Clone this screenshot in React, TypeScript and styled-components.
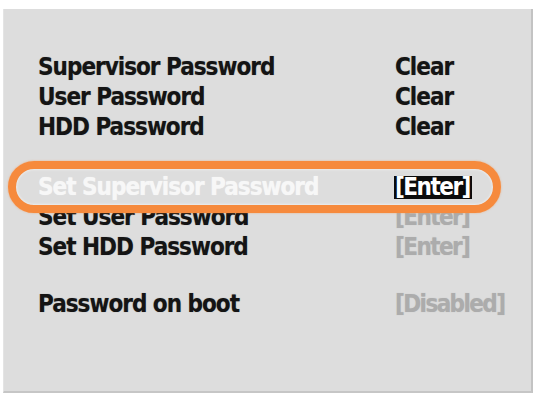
import styled, { createGlobalStyle } from "styled-components";

const GlobalStyle = createGlobalStyle`
  html, body {
    margin: 0;
    padding: 0;
    background: #ffffff;
  }
`;

const Screen = styled.div`
  width: 539px;
  height: 401px;
  padding: 9px 0 0 3px;
  box-sizing: border-box;
`;

const Panel = styled.div`
  width: 530px;
  height: 384px;
  box-sizing: border-box;
  background: #dddddd;
  border-right: 2px solid #c3c3c3;
  border-bottom: 2px solid #c6c6c6;
  border-left: 1px solid #e4e4e4;
  padding: 43px 0 0 34px;
  font-family: "Liberation Sans Narrow", "DejaVu Sans Condensed", sans-serif;
  font-weight: 700;
  font-size: 24px;
  line-height: 30px;
  letter-spacing: -1px;
  color: #141414;
`;

const Section = styled.div<{ $gap: number }>`
  display: grid;
  grid-template-columns: 357px auto;
  margin-top: ${(p) => p.$gap}px;
`;

const Row = styled.div`
  display: contents;
`;

const Label = styled.div<{ $selected?: boolean }>`
  position: relative;
  white-space: nowrap;
  color: ${(p) => (p.$selected ? "#f7f7f7" : "#141414")};
  text-shadow: 0 0 1px ${(p) => (p.$selected ? "rgba(255,255,255,0.6)" : "rgba(0,0,0,0.35)")};
`;

const Value = styled.div<{ $muted?: boolean }>`
  white-space: nowrap;
  color: ${(p) => (p.$muted ? "#acacac" : "#141414")};
  letter-spacing: ${(p) => (p.$muted ? "-1.6px" : "-1px")};
  text-shadow: 0 0 1px ${(p) => (p.$muted ? "rgba(150,150,150,0.4)" : "rgba(0,0,0,0.35)")};
`;

const Field = styled.span`
  display: inline-block;
  background: #0c0c0c;
  color: #ffffff;
  letter-spacing: -1.5px;
  line-height: 23px;
  padding: 0 2px 0 1px;
  margin-left: -1px;
`;

const Highlight = styled.div`
  position: absolute;
  left: -30px;
  top: -11px;
  width: 493px;
  height: 52px;
  box-sizing: border-box;
  border: 8px solid #f68a3d;
  border-radius: 26px;
  box-shadow: inset 0 0 3px rgba(255, 255, 255, 0.9), 0 0 2px rgba(246, 138, 61, 0.6);
  pointer-events: none;
  z-index: 2;
`;

type Item = {
  label: string;
  value: string;
  muted?: boolean;
  selected?: boolean;
};

const groups: { gap: number; items: Item[] }[] = [
  {
    gap: 0,
    items: [
      { label: "Supervisor Password", value: "Clear" },
      { label: "User Password", value: "Clear" },
      { label: "HDD Password", value: "Clear" },
    ],
  },
  {
    gap: 30,
    items: [
      { label: "Set Supervisor Password", value: "[Enter]", selected: true },
      { label: "Set User Password", value: "[Enter]", muted: true },
      { label: "Set HDD Password", value: "[Enter]", muted: true },
    ],
  },
  {
    gap: 27,
    items: [{ label: "Password on boot", value: "[Disabled]", muted: true }],
  },
];

const App = () => {
  return (
    <>
      <GlobalStyle />
      <Screen>
        <Panel>
          {groups.map((g, i) => (
            <Section key={i} $gap={g.gap}>
              {g.items.map((item) => (
                <Row key={item.label}>
                  <Label $selected={item.selected}>
                    {item.label}
                    {item.selected && <Highlight />}
                  </Label>
                  <Value $muted={item.muted}>
                    {item.selected ? <Field>{item.value}</Field> : item.value}
                  </Value>
                </Row>
              ))}
            </Section>
          ))}
        </Panel>
      </Screen>
    </>
  );
};

export default App;
